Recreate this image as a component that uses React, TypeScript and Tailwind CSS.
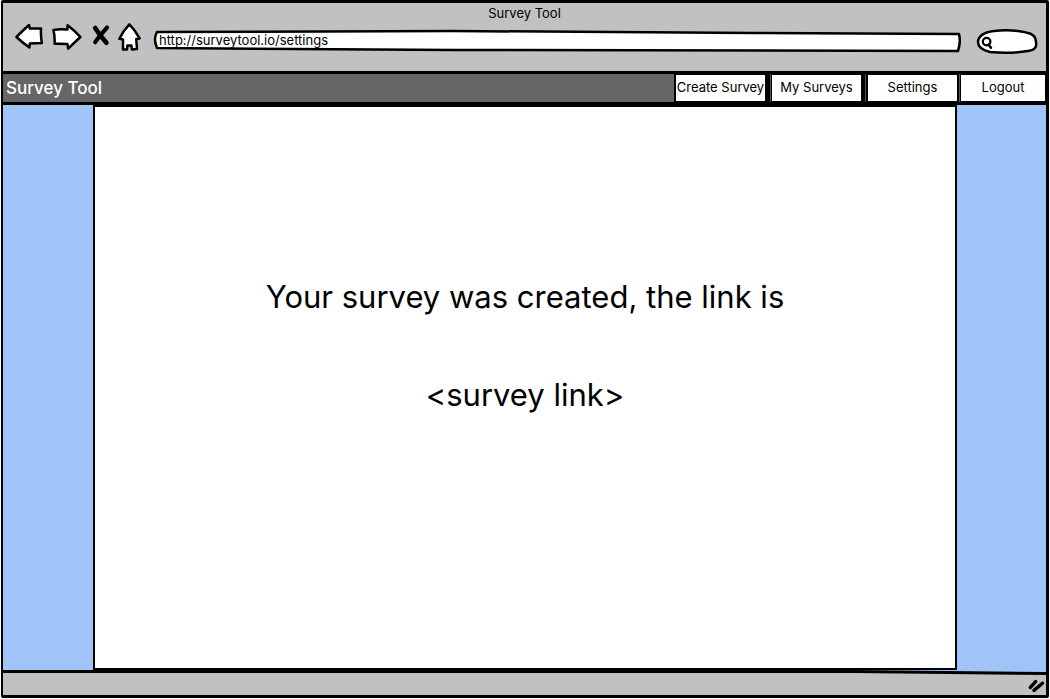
import React from "react";

const navItems = [
  { label: "Create Survey", cell: "w-[94px] border-r-5" },
  { label: "My Surveys", cell: "w-[94px] border-l-1 border-r-4" },
  { label: "Settings", cell: "w-[93px] border-l-2 border-r-2" },
  { label: "Logout", cell: "w-[86px] border-l-1 border-r-1" },
];

const ink = {
  stroke: "black",
  strokeWidth: 2.5,
  strokeLinejoin: "round" as const,
  strokeLinecap: "round" as const,
};

function BackIcon() {
  return (
    <svg width="28" height="28" viewBox="0 0 28 28" fill="white" {...ink} aria-hidden="true">
      <path d="M1.4 14 Q8 7.4 14 2 L14.8 5.4 L26 5.6 Q25.6 12 26.8 20 L14.8 20.6 L14.4 24.6 Q8 20 1.4 14 Z" />
    </svg>
  );
}

function ForwardIcon() {
  return (
    <svg width="30" height="28" viewBox="0 0 30 28" fill="white" {...ink} aria-hidden="true">
      <path d="M1.4 7 Q8 5.8 15.4 6.6 L15.6 2.2 Q22 7 28.4 14 Q22 20 16.2 25.6 L15.4 21 Q9 20.6 2.6 20.8 Q3 13 1.4 7 Z" />
    </svg>
  );
}

function StopIcon() {
  return (
    <svg width="18" height="28" viewBox="0 0 18 28" fill="none" {...ink} aria-hidden="true">
      <path d="M3.2 4 Q7 10 14.4 18.8" strokeWidth={4.6} />
      <path d="M15 3.6 Q8 11 3.2 18.2" strokeWidth={4.2} />
    </svg>
  );
}

function HomeIcon() {
  return (
    <svg width="24" height="28" viewBox="0 0 24 28" fill="white" {...ink} aria-hidden="true">
      <path d="M11.4 1.4 Q17 7 21.6 15.4 L18.2 16 L19 26 L14 26.6 L13.4 22.6 L9.4 22.6 L9 26.6 L5 26.4 L5 16.4 L1.4 15.8 Q5 8 11.4 1.4 Z" />
    </svg>
  );
}

export default function App() {
  return (
    <div className="flex min-h-screen flex-col bg-white px-[1px] pb-[1px] font-['Inter',sans-serif] text-black">
      <div className="flex flex-1 flex-col rounded-[2px] border-3 border-l-2 border-black bg-[#a0c4f8]">
        <header className="h-[71px] border-b-3 border-black bg-[#c1c1c1]">
          <p className="pt-[2px] text-center text-[13px] leading-4">Survey Tool</p>
          <div className="flex items-start pr-[8px] pl-[12px]">
            <button type="button" aria-label="Back" className="mt-[2px]"><BackIcon /></button>
            <button type="button" aria-label="Forward" className="mt-[2px] ml-[9px]"><ForwardIcon /></button>
            <button type="button" aria-label="Stop" className="mt-[3px] ml-[10px]"><StopIcon /></button>
            <button type="button" aria-label="Home" className="mt-[2px] ml-[8px]"><HomeIcon /></button>
            <div className="relative mt-[8px] ml-[11px] h-[24px] flex-1">
              <svg className="absolute inset-0 h-full w-full" viewBox="0 0 808 24" preserveAspectRatio="none" fill="white" {...ink} aria-hidden="true">
                <path d="M4 3 L300 2 L600 4 L806 5 Q808 13 805 22 L300 21 L4 19 Q0 10 4 3 Z" />
              </svg>
              <input aria-label="Address" defaultValue="http://surveytool.io/settings" className="relative block h-[22px] w-full bg-transparent px-[6px] text-[13px] leading-4 outline-none" />
            </div>
            <div className="relative mt-[8px] ml-[15px] h-[26px] w-[62px]">
              <svg className="absolute inset-0" width="62" height="26" viewBox="0 0 62 26" fill="white" {...ink} aria-hidden="true">
                <path d="M2 13 Q2.4 4 18 2 Q34 0 50 3.4 Q60 5 60 13 Q61.6 21 52 22 Q34 25 14 23 Q2 20 2 13 Z" />
                <circle cx="10.6" cy="12.6" r="3.8" strokeWidth={2.2} />
                <path d="M12.4 15.6 L15 18.8" />
              </svg>
              <input type="search" aria-label="Search" className="relative block h-full w-full bg-transparent pr-2 pl-5 text-[13px] outline-none" />
            </div>
          </div>
        </header>
        <div className="flex h-[31px] items-stretch border-b-3 border-black bg-[#666666]">
          <h1 className="flex-1 pl-[3px] text-[17px] leading-7 font-medium text-white">Survey Tool</h1>
          <nav className="flex gap-[1px] border-l-2 border-black bg-[#555555]">
            {navItems.map((item) => (
              <a key={item.label} href="#" className={`flex items-center justify-center border-t-1 border-b-1 border-black bg-white text-[13px] whitespace-nowrap ${item.cell}`}>
                {item.label}
              </a>
            ))}
          </nav>
        </div>
        <main className="mr-[89px] ml-[90px] flex flex-1 flex-col items-center gap-[58px] border-2 border-black bg-white pt-[170px] text-[31px] leading-10">
          <p>Your survey was created, the link is</p>
          <p>&lt;survey link&gt;</p>
        </main>
        <footer className="relative flex h-[25px] items-end justify-end bg-[#c1c1c1]">
          <svg className="absolute inset-x-0 top-0 h-[6px] w-full" viewBox="0 0 1043 6" preserveAspectRatio="none" aria-hidden="true">
            <path d="M850 0 H1043 V3 Z" fill="#a0c4f8" />
            <path d="M0 1.5 H850 L1043 3.5" fill="none" stroke="black" strokeWidth={3} />
          </svg>
          <svg width="18" height="18" viewBox="0 0 18 18" fill="none" {...ink} strokeWidth={3.4} aria-hidden="true">
            <path d="M2.4 10.4 L7.6 4.6 M6 13.4 Q9.6 10.4 14.4 6.2" />
          </svg>
        </footer>
      </div>
    </div>
  );
}
